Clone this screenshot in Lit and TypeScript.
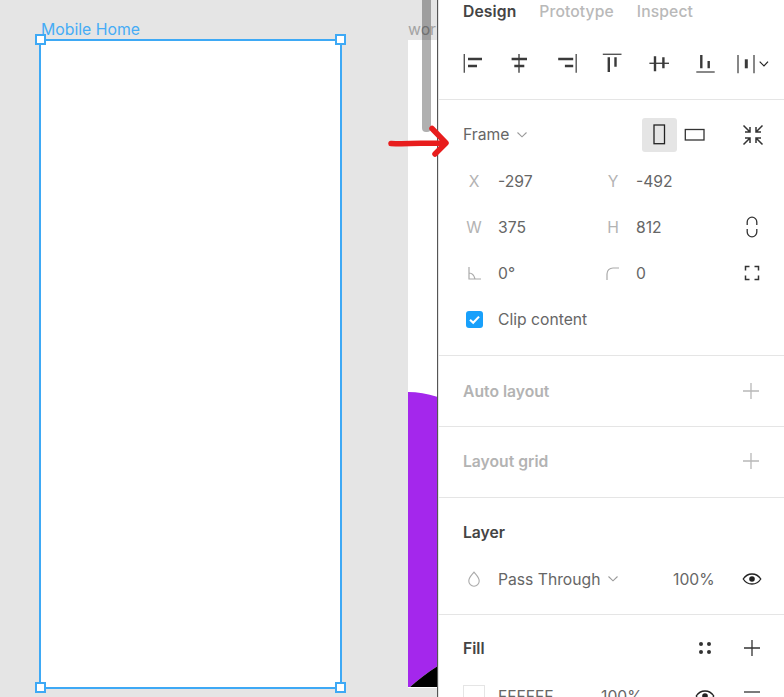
import { LitElement, html, css, svg, TemplateResult } from 'lit';
import { customElement } from 'lit/decorators.js';

const icon = (w: number, h: number, body: TemplateResult | unknown, cls = '') =>
	html`<svg class=${cls} width=${w} height=${h} viewBox="0 0 ${w} ${h}" fill="none">${body}</svg>`;

const chevron = icon(12, 8, svg`<path d="M1.5 1.5 6 5.8l4.5-4.3" stroke="#9a9a9a" stroke-width="1.1"/>`);

const eye = icon(20, 14, svg`
	<path d="M1.2 7C3.4 3.6 6.4 2 10 2s6.6 1.6 8.8 5c-2.2 3.4-5.2 5-8.8 5S3.4 10.4 1.2 7Z" stroke="#222" stroke-width="1.3"/>
	<circle cx="10" cy="7" r="2.8" fill="#222"/>`);

const plus = (color: string) =>
	icon(18, 18, svg`<path d="M9 1v16M1 9h16" stroke=${color} stroke-width="1.3"/>`);

const alignIcons = [
	svg`<path d="M3.3 3v18.7" stroke="#555" stroke-width="1.4"/><path d="M7 8h14M7 15h9" stroke="#3a3a3a" stroke-width="2.4"/>`,
	svg`<path d="M12 3v18.7" stroke="#444" stroke-width="1.4"/><path d="M4.6 8H20M7.3 15h10" stroke="#3a3a3a" stroke-width="2.4"/>`,
	svg`<path d="M22.2 3v18.7" stroke="#555" stroke-width="1.4"/><path d="M4.2 8h15M10.9 15h8.3" stroke="#3a3a3a" stroke-width="2.4"/>`,
	svg`<path d="M2.8 3.3h18.7" stroke="#555" stroke-width="1.4"/><path d="M8.8 6.3V21M15.5 6.3v9.4" stroke="#3a3a3a" stroke-width="2.4"/>`,
	svg`<path d="M2.4 12.3H22" stroke="#444" stroke-width="1.4"/><path d="M8 5.3v15M16.4 6.3v11" stroke="#3a3a3a" stroke-width="2.4"/>`,
	svg`<path d="M3.3 21h18.4" stroke="#555" stroke-width="1.4"/><path d="M8.3 4v13.3M15.7 10v7.3" stroke="#3a3a3a" stroke-width="2.4"/>`,
];

@customElement('app-root')
export class AppRoot extends LitElement {
	protected render(): TemplateResult {
		return html`
			<section class="canvas">
				<span class="frame-name">Mobile Home</span>
				<div class="frame">
					<i class="handle tl"></i><i class="handle tr"></i>
					<i class="handle bl"></i><i class="handle br"></i>
				</div>
				<span class="other-name">wor</span>
				<div class="other-frame">
					<svg width="30" height="648" viewBox="0 0 30 648">
						<path d="M0 352C10 352 20 354 30 357V626C20 632 10 640 2 647H0Z" fill="#a427ec" />
						<path d="M2 647C10 640 20 632 30 626V647Z" fill="#000" />
					</svg>
				</div>
				<div class="scrollbar"></div>
			</section>
			<aside class="panel">
				<div class="section top">
					<nav class="tabs">
						<span class="active">Design</span><span>Prototype</span><span>Inspect</span>
					</nav>
					<div class="aligns">
						${alignIcons.map((a) => icon(24, 24, a))}
						${icon(36, 24, svg`
							<path d="M5 4v18.3M21 4v18.3" stroke="#555" stroke-width="1.4"/>
							<path d="M13.3 8.3v9" stroke="#3a3a3a" stroke-width="3"/>
							<path d="M26.7 10.7 31 15l4-4.3" stroke="#222" stroke-width="1.2"/>`, 'distribute')}
					</div>
				</div>
				<div class="section frame-props">
					<div class="frame-row">
						<span class="frame-select">Frame ${chevron}</span>
						<div class="orient">
							<span class="on">${icon(13, 21, svg`<rect x="1" y="1" width="10.5" height="18.7" stroke="#222" stroke-width="1.3"/>`)}</span>
							<span>${icon(22, 14, svg`<rect x="1.3" y="1.5" width="18.7" height="10.5" stroke="#333" stroke-width="1.3"/>`)}</span>
						</div>
						<span class="end compress">
							${icon(22, 22, svg`<path d="M1.5 1.5 8 8M3 8h5V3M20.5 1.5 14 8M19 8h-5V3M1.5 20.5 8 14M3 14h5v5M20.5 20.5 14 14M19 14h-5v5" stroke="#333" stroke-width="1.5"/>`)}
						</span>
					</div>
					<div class="grid">
						<span class="label first">X</span><span>-297</span>
						<span class="label">Y</span><span>-492</span><span></span>

						<span class="label first">W</span><span>375</span>
						<span class="label">H</span><span>812</span>
						<span class="end">
							${icon(12, 22, svg`<path d="M1.2 9V6a4.8 4.8 0 0 1 9.6 0v3M1.2 13v3a4.8 4.8 0 0 0 9.6 0v-3" stroke="#333" stroke-width="1.3"/>`)}
						</span>

						<span class="label first">${icon(14, 13, svg`<path d="M2 0v12h12M2 6c3 0 5 2 6 6" stroke="#aaa" stroke-width="1.2"/>`)}</span><span>0°</span>
						<span class="label">${icon(14, 13, svg`<path d="M1 13V7c0-3.5 2.5-6 6-6h6" stroke="#aaa" stroke-width="1.2"/>`)}</span><span>0</span>
						<span class="end">
							${icon(16, 16, svg`<path d="M1.5 5.5v-4h4M10.5 1.5h4v4M1.5 10.5v4h4M10.5 14.5h4v-4" stroke="#333" stroke-width="1.5"/>`)}
						</span>
					</div>
					<label class="clip">
						<span class="check">
							${icon(17, 17, svg`<path d="M4 8.7 7.2 11.8 13 5.6" stroke="#fff" stroke-width="2.1"/>`)}
						</span>
						Clip content
					</label>
				</div>
				<div class="section muted-head">
					<span>Auto layout</span>${plus('#b8b8b8')}
				</div>
				<div class="section muted-head grid-head">
					<span>Layout grid</span>${plus('#b8b8b8')}
				</div>
				<div class="section layer">
					<h3>Layer</h3>
					<div class="layer-row">
						<span class="drop">
							${icon(14, 16, svg`<path d="M7 1.2C4.8 4 1.8 6.5 1.8 10a5.2 5.2 0 0 0 10.4 0C12.2 6.5 9.2 4 7 1.2Z" stroke="#aaa" stroke-width="1.1"/>`)}
						</span>
						<span class="blend">Pass Through ${chevron}</span>
						<span class="pct">100%</span>
						<span class="end">${eye}</span>
					</div>
				</div>
				<div class="section fill">
					<div class="fill-head">
						<h3>Fill</h3>
						<span class="dots">
							${icon(14, 14, svg`<g fill="#333"><circle cx="3" cy="3" r="2"/><circle cx="11" cy="3" r="2"/><circle cx="3" cy="11" r="2"/><circle cx="11" cy="11" r="2"/></g>`)}
						</span>
						${plus('#333')}
					</div>
					<div class="fill-row">
						<span class="swatch"></span>
						<span class="hex">FFFFFF</span>
						<span class="fill-pct">100%</span>
						<span class="fill-eye">${eye}</span>
						${icon(18, 18, svg`<path d="M1 5h16" stroke="#333" stroke-width="1.3"/>`)}
					</div>
				</div>
			</aside>
			<svg class="arrow" width="62" height="34" viewBox="0 0 62 34" fill="none">
				<path d="M3 18.5C20 19.5 40 17.5 57 18M44 3.5 58 18 47 29" stroke="#e81d1d" stroke-width="5.5" stroke-linecap="round" stroke-linejoin="round" />
			</svg>
		`;
	}

	static styles = css`
		:host {
			display: flex;
			position: relative;
			width: 784px;
			height: 697px;
			overflow: hidden;
			background: #fff;
			font-family: Inter, 'Liberation Sans', sans-serif;
			font-size: 15.7px;
			color: #666;
		}

		* {
			box-sizing: border-box;
		}

		svg {
			display: block;
			flex: none;
		}

		.canvas {
			position: relative;
			flex: none;
			width: 437px;
			background: #e5e5e5;
			overflow: hidden;
		}

		.frame-name {
			position: absolute;
			left: 41px;
			top: 20px;
			font-size: 15.8px;
			color: #45acf5;
			white-space: nowrap;
		}

		.frame {
			position: absolute;
			left: 39px;
			top: 39px;
			width: 303px;
			height: 650px;
			background: #fff;
			border: 2px solid #3ea9f5;
		}

		.handle {
			position: absolute;
			width: 11px;
			height: 11px;
			background: #fff;
			border: 2px solid #3ea9f5;
		}

		.tl { left: -6px; top: -7px; }
		.tr { right: -6px; top: -7px; }
		.bl { left: -6px; bottom: -6px; }
		.br { right: -6px; bottom: -6px; }

		.other-name {
			position: absolute;
			left: 408px;
			top: 20px;
			font-size: 15.8px;
			color: #a3a3a3;
		}

		.other-frame {
			position: absolute;
			left: 408px;
			top: 40px;
			width: 30px;
			height: 648px;
			background: #fff;
		}

		.scrollbar {
			position: absolute;
			left: 422px;
			top: 0;
			width: 9px;
			height: 132px;
			border-radius: 0 0 4px 4px;
			background: rgba(0, 0, 0, 0.31);
		}

		.panel {
			flex: 1;
			min-width: 0;
			border-left: 1px solid #555;
			box-shadow: inset 1px 0 0 #e5e5e5;
		}

		.section {
			padding: 0 20px 0 24px;
			border-bottom: 1px solid #e5e5e5;
			margin-left: 1px;
		}

		.top {
			height: 100px;
		}

		.tabs {
			display: flex;
			gap: 23px;
			height: 22px;
			align-items: center;
			font-weight: 500;
			letter-spacing: 0.1px;
			color: #b9b9b9;
		}

		.tabs .active {
			font-weight: 600;
			color: #444;
		}

		.aligns {
			display: flex;
			gap: 22.4px;
			margin: 29px 0 0 -2px;
		}

		.distribute {
			margin-left: -6.4px;
		}

		.frame-props {
			height: 256px;
			padding-top: 17px;
		}

		.frame-row {
			display: flex;
			align-items: center;
			height: 35px;
		}

		.frame-select {
			display: flex;
			align-items: center;
			gap: 7px;
			width: 179px;
		}

		.orient {
			display: flex;
		}

		.orient span {
			display: flex;
			align-items: center;
			justify-content: center;
			width: 35px;
			height: 34px;
			border-radius: 3px;
		}

		.orient .on {
			background: #e5e5e5;
		}

		.compress {
			margin-left: auto;
		}

		.grid {
			display: grid;
			grid-template-columns: 35px 103px 35px 1fr 24px;
			grid-auto-rows: 46px;
			align-items: center;
			margin-top: 6px;
		}

		.label {
			display: flex;
			justify-content: center;
			width: 24px;
			color: #b3b3b3;
		}

		.first {
			width: 22px;
		}

		.end {
			display: flex;
			justify-content: center;
		}

		.clip {
			display: flex;
			align-items: center;
			gap: 15px;
			height: 46px;
			padding-left: 3px;
		}

		.check {
			width: 17px;
			height: 17px;
			border-radius: 3px;
			background: #18a0fb;
		}

		.muted-head {
			display: flex;
			align-items: center;
			justify-content: space-between;
			height: 71px;
			padding-right: 24px;
			font-weight: 600;
			color: #b3b3b3;
		}

		.grid-head {
			padding-bottom: 2px;
		}

		h3 {
			margin: 0;
			font-size: inherit;
			font-weight: 600;
			color: #444;
		}

		.layer {
			height: 117px;
			padding-top: 25px;
		}

		.layer-row {
			display: flex;
			align-items: center;
			height: 24px;
			margin-top: 25px;
		}

		.drop {
			width: 35px;
			padding-left: 4px;
		}

		.blend {
			display: flex;
			align-items: center;
			gap: 7px;
			width: 175px;
		}

		.pct {
			width: 69px;
		}

		.fill {
			padding-top: 23px;
			border-bottom: 0;
		}

		.fill-head {
			display: flex;
			align-items: center;
			height: 20px;
		}

		.fill-head h3 {
			width: 235px;
		}

		.dots {
			width: 45px;
		}

		.fill-row {
			display: flex;
			align-items: center;
			height: 24px;
			margin-top: 26px;
		}

		.swatch {
			width: 22px;
			height: 22px;
			background: #fff;
			border: 1px solid #e5e5e5;
			margin-right: 13px;
		}

		.hex {
			width: 103px;
		}

		.fill-pct {
			width: 94px;
		}

		.fill-eye {
			width: 48px;
		}

		.arrow {
			position: absolute;
			left: 388px;
			top: 125px;
		}
	`;
}
